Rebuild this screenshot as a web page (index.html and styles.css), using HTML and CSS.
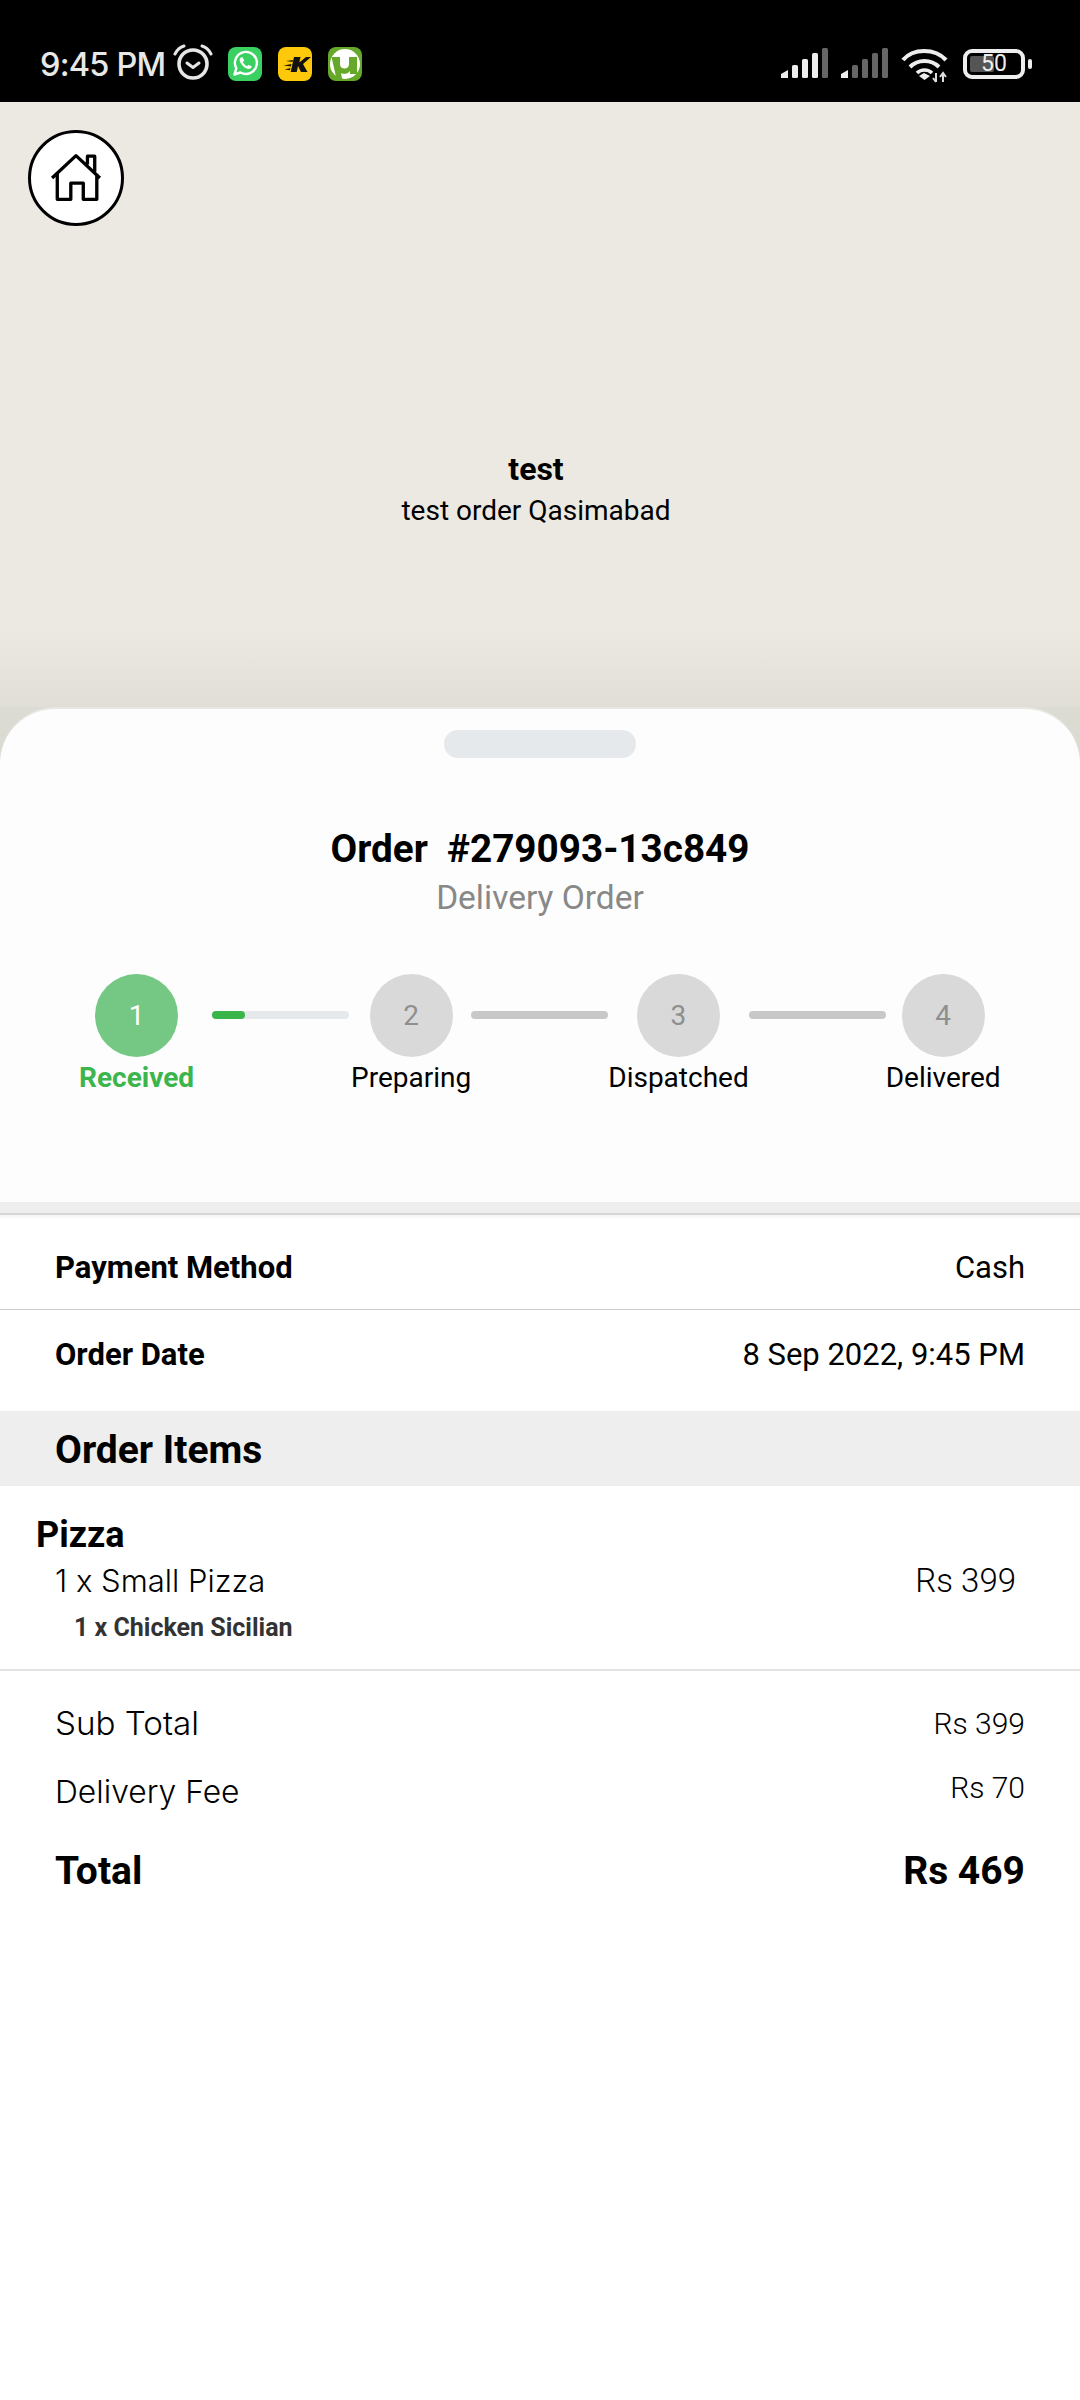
FILE: index.html
```html
<!DOCTYPE html>
<html lang="en">
<head>
<meta charset="utf-8">
<title>Order</title>
<link rel="stylesheet" href="styles.css">
</head>
<body>
<div class="statusbar">
  <span class="time">9:45 PM</span>
  <svg class="alarm" width="40" height="36" viewBox="0 0 40 36"><circle cx="20" cy="20" r="14" fill="none" stroke="#e6e6e6" stroke-width="3.6"/><path d="M14 19l6 4.500 6-4.500" fill="none" stroke="#e6e6e6" stroke-width="3" stroke-linecap="round" stroke-linejoin="round"/><path d="M2 10C4 6 7 3 11 2M38 10C36 6 33 3 29 2" fill="none" stroke="#e6e6e6" stroke-width="3" stroke-linecap="round"/></svg>
  <svg class="app app-first" width="34" height="34" viewBox="0 0 34 34"><rect width="34" height="34" rx="8" fill="#3bd062"/><path d="M6.500 27.500l1.800-6.200a11 11 0 1 1 4.200 4.200z" fill="none" stroke="#fff" stroke-width="2.400" stroke-linejoin="round"/><path d="M13 10.500c-1.500 1-2 3 0 6s4.500 5 7 5.500c2 .3 3.500-1 3.800-2.500l-3.300-1.800-1.500 1.500c-1.500-.5-3.500-2.500-4.200-4.200l1.400-1.500-1.600-3.200z" fill="#fff"/></svg>
  <svg class="app" width="34" height="34" viewBox="0 0 34 34"><rect width="34" height="34" rx="8" fill="#fdc90a"/><path d="M16 10h6.500l-1.200 5.500L28 10h5l-8 7 4.500 8h-6.500l-3-6-1.300 6h-6z" fill="#111"/><path d="M15 13l-7 1 6.500 1zM13.500 17l-8 1.500 7.500 1zM12.500 21l-6 1.500 5.500.8z" fill="#221a00"/></svg>
  <svg class="app" width="34" height="34" viewBox="0 0 34 34"><rect width="34" height="34" rx="8" fill="#66a82a"/><circle cx="17" cy="17" r="15" fill="#fff"/><path d="M3.500 10h8.500v7c0 3 2 4.500 4.500 4.500s4.500-1.500 4.500-4.500V10h8v17h-7v-3c-1.500 2-3.500 2.800-6 2.800-1 0-2 0-3-.8l1.500 8H9z" fill="#66a82a"/></svg>
  <span class="status-right">
    <svg width="48" height="32" viewBox="0 0 48 32"><path d="M0 30v-4l7-4v8z" fill="#eee"/><rect x="11" y="17" width="6" height="13" rx="1.500" fill="#eee"/><rect x="21" y="11" width="6" height="19" rx="1.500" fill="#eee"/><rect x="31" y="5" width="6" height="25" rx="1.500" fill="#eee"/><rect x="41" y="0" width="6" height="30" rx="1.500" fill="#666"/></svg>
    <svg class="signal-two" width="48" height="32" viewBox="0 0 48 32"><path d="M0 30v-4l7-4v8z" fill="#eee"/><rect x="11" y="17" width="6" height="13" rx="1.500" fill="#666"/><rect x="21" y="11" width="6" height="19" rx="1.500" fill="#666"/><rect x="31" y="5" width="6" height="25" rx="1.500" fill="#666"/><rect x="41" y="0" width="6" height="30" rx="1.500" fill="#666"/></svg>
    <svg class="wifi" width="48" height="36" viewBox="0 0 48 36"><path d="M2 13C12 1 34 1 45 13" fill="none" stroke="#eee" stroke-width="4.200"/><path d="M9 20c8-8 21-8 29 0" fill="none" stroke="#eee" stroke-width="4"/><path d="M16 26c4-4 11-4 15 0" fill="none" stroke="#eee" stroke-width="3.600"/><path d="M18 29l5-3 6 3-5.500 4z" fill="#eee"/><path d="M35 26v9M32 31l3 4M42 35v-9M39 30l3-4 3 4" fill="none" stroke="#ddd" stroke-width="2"/></svg>
    <span class="battery"><span class="battery-fill"></span><span class="battery-num">50</span></span>
    <span class="battery-nub"></span>
  </span>
</div>

<section class="hero">
  <a class="home" href="#" aria-label="Home">
    <svg width="52" height="52" viewBox="0 0 50 50"><path d="M2 25L25 3.500 48 25M7 21v24.500h13V30h12v15.500h13V21M36 12V4h7v15" fill="none" stroke="#000" stroke-width="3.200" stroke-linejoin="round"/></svg>
  </a>
  <div class="hero-title">test</div>
  <div class="hero-sub">test order Qasimabad</div>
</section>

<div class="sheet-back">
<section class="sheet">
  <div class="handle"></div>
  <h1 class="order-no">Order&nbsp; #279093-13c849</h1>
  <p class="order-type">Delivery Order</p>
  <div class="steps">
    <div class="step active"><div class="dot">1</div><div class="label">Received</div></div>
    <div class="bar bar-first"><div class="bar-progress"></div></div>
    <div class="step"><div class="dot">2</div><div class="label">Preparing</div></div>
    <div class="bar bar-todo"></div>
    <div class="step"><div class="dot">3</div><div class="label">Dispatched</div></div>
    <div class="bar bar-todo"></div>
    <div class="step"><div class="dot">4</div><div class="label">Delivered</div></div>
  </div>
</section>
</div>
<div class="strip"></div>

<section class="details">
  <div class="info-row info-row-line"><span class="info-key">Payment Method</span><span class="info-val">Cash</span></div>
  <div class="info-row info-row-date"><span class="info-key">Order Date</span><span class="info-val">8 Sep 2022, 9:45 PM</span></div>
</section>

<h2 class="items-head">Order Items</h2>
<section class="items">
  <div class="category">Pizza</div>
  <div class="item-row"><span>1 x Small Pizza</span><span class="item-price">Rs 399</span></div>
  <div class="addon">1 x Chicken Sicilian</div>
</section>
<section class="totals">
  <div class="total-row row-sub"><span class="total-key">Sub Total</span><span class="total-val">Rs 399</span></div>
  <div class="total-row row-fee"><span class="total-key">Delivery Fee</span><span class="total-val val-fee">Rs 70</span></div>
  <div class="total-row row-grand"><span>Total</span><span>Rs 469</span></div>
</section>
</body>
</html>
```

FILE: styles.css
```css
* { box-sizing: border-box; }
html, body { margin: 0; padding: 0; }
body { width: 1080px; height: 2400px; background: #fff; color: #000; font-family: Roboto, "Liberation Sans", sans-serif; overflow: hidden; }

.statusbar { height: 102px; background: #000; display: flex; align-items: center; padding: 26px 0 0 40px; color: #e8e8e8; }
.time { font-family: Inter, Roboto, sans-serif; font-size: 32.500px; font-weight: 500; letter-spacing: -0.8px; width: 133px; white-space: nowrap; }
.alarm { margin-top: -4px; }
.app { margin-left: 16px; }
.app-first { margin-left: 15px; }
.status-right { margin-left: auto; display: flex; align-items: center; padding-right: 48px; }
.signal-two { margin-left: 12px; }
.wifi { margin-left: 12px; margin-top: 2px; }
.battery { position: relative; margin-left: 14px; width: 62px; height: 30px; border: 4px solid #eee; border-radius: 9px; display: block; }
.battery-fill { position: absolute; left: 3px; top: 3px; bottom: 3px; width: 24px; background: #555; border-radius: 2px; }
.battery-num { position: absolute; left: 0; right: 0; top: -3px; text-align: center; font-size: 23px; line-height: 28px; color: #eee; }
.battery-nub { width: 4px; height: 10px; margin-left: 3px; background: #eee; border-radius: 2px; }

.hero { height: 605px; background: linear-gradient(#ebe9e1 0, #ebe9e1 530px, #e0ded7 100%); padding: 28px 0 0 28px; }
.home { width: 96px; height: 96px; border: 3px solid #000; border-radius: 50%; background: #fff; display: flex; align-items: center; justify-content: center; }
.hero-title { margin: 223px 0 0 -28px; width: 1072px; text-align: center; font-size: 32px; font-weight: 700; line-height: 40px; }
.hero-sub { margin: 2px 0 0 -28px; width: 1072px; text-align: center; font-size: 28px; line-height: 40px; }

.sheet-back { background: #dbdad3; }
.sheet { height: 495px; background: #fdfdfd; border-top: 2px solid #e8e8e3; border-radius: 56px 56px 0 0; padding-top: 21px; }
.handle { width: 192px; height: 28px; margin: 0 auto; background: #e6e9ec; border-radius: 14px; }
.order-no { margin: 66px 0 0; text-align: center; font-size: 38.700px; font-weight: 700; line-height: 50px; }
.order-type { margin: 1px 0 0; text-align: center; font-size: 33.500px; line-height: 46px; color: #888; }
.steps { display: flex; align-items: flex-start; margin-top: 53px; padding-left: 79px; }
.step { display: flex; flex-direction: column; align-items: center; }
.dot { width: 83px; height: 83px; border-radius: 50%; background: #d9d9d9; color: #8f8f8f; font-size: 28px; display: flex; align-items: center; justify-content: center; }
.label { margin-top: 3px; font-size: 28px; line-height: 36px; white-space: nowrap; }
.active .dot { background: #74c883; color: #fff; }
.active .label { color: #3cb54d; font-weight: 700; }
.bar { width: 137px; height: 8px; margin-top: 37px; border-radius: 4px; }
.bar-first { margin-left: 18px; margin-right: 2px; background: #e6e9ec; }
.bar-progress { width: 33px; height: 8px; border-radius: 4px; background: #39b54a; }
.bar-todo { background: #c8c8c8; }
.strip { height: 13px; background: #eee; border-bottom: 2px solid #d6d6d6; box-shadow: 0 2px 3px rgba(0, 0, 0, 0.05); }

.info-row { display: flex; justify-content: space-between; align-items: center; padding: 0 55px; font-size: 31px; }
.info-row-line { height: 95px; padding-top: 10px; border-bottom: 1px solid #ccc; }
.info-row-date { height: 88px; }
.info-key { font-weight: 700; font-size: 31px; }
.items-head { margin: 13px 0 0; height: 75px; background: #eee; padding-left: 55px; font-size: 39px; font-weight: 700; line-height: 78px; }

.items { height: 185px; border-bottom: 2px solid #e2e2e2; padding-top: 26px; }
.category { margin-left: 36px; font-size: 36px; font-weight: 700; line-height: 46px; }
.item-row { display: flex; justify-content: space-between; padding: 0 64px 0 55px; font-family: Inter, Roboto, sans-serif; font-weight: 300; font-size: 31px; line-height: 46px; }
.item-price { font-family: Roboto, sans-serif; font-weight: 300; font-size: 33px; }
.addon { margin: 4px 0 0 74px; font-size: 25px; font-weight: 700; color: #333; line-height: 40px; }

.totals { padding: 0 55px; }
.total-row { display: flex; justify-content: space-between; }
.total-key { font-family: Inter, Roboto, sans-serif; font-weight: 300; font-size: 32.500px; }
.row-sub .total-key { font-size: 33.200px; }
.row-fee .total-key { font-size: 31.800px; }
.total-val { font-size: 30px; font-weight: 300; }
.row-sub { margin-top: 32px; align-items: center; height: 40px; }
.row-fee { margin-top: 28px; align-items: center; height: 40px; }
.val-fee { margin-top: -7px; }
.row-grand { margin-top: 35px; font-size: 39px; font-weight: 700; line-height: 50px; }
```
